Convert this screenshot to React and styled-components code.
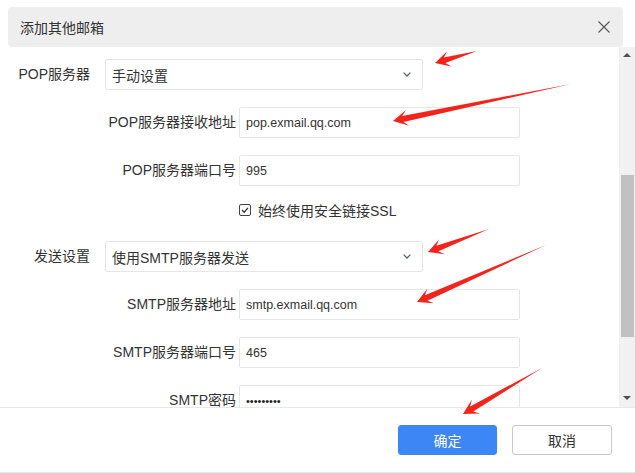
import React from 'react'
import styled, { createGlobalStyle } from 'styled-components'

const GlobalStyle = createGlobalStyle`
  html, body {
    margin: 0;
    padding: 0;
    background: #fff;
  }
  body {
    font-family: "Liberation Sans", Arial, "Noto Sans CJK SC", sans-serif;
    color: #333;
  }
`

const Page = styled.div`
  position: relative;
  width: 635px;
  height: 473px;
  display: flex;
  flex-direction: column;
  overflow: hidden;
`

const Header = styled.div`
  height: 40px;
  margin: 7px 12px 0 8px;
  padding: 0 13px 0 12px;
  background: #eeeeee;
  border-radius: 4px;
  display: flex;
  align-items: center;
  justify-content: space-between;
  font-size: 14px;
  color: #333;
`

const CloseBtn = styled.span`
  display: flex;
  width: 12px;
  height: 12px;
  cursor: pointer;
`

const Body = styled.div`
  height: 360px;
  display: flex;
`

const Content = styled.div`
  flex: 1;
  overflow: hidden;
  padding-top: 12px;
`

const Row = styled.div`
  display: flex;
  align-items: center;
  height: 31px;
  margin-bottom: 17px;
  font-size: 14px;
`

const Label = styled.div`
  width: ${p => (p.$sub ? '236px' : '90px')};
  margin-right: ${p => (p.$sub ? '3px' : '15px')};
  line-height: 14px;
  padding-bottom: 2px;
  text-align: right;
  white-space: nowrap;
  color: #333;
`

const Select = styled.div`
  box-sizing: border-box;
  width: 318px;
  height: 31px;
  border: 1px solid #e6e6e6;
  border-radius: 2px;
  padding: 0 11px 0 6px;
  display: flex;
  align-items: center;
  justify-content: space-between;
  font-size: 14px;
  color: #333;
`

const Field = styled.div`
  box-sizing: border-box;
  width: 281px;
  height: 31px;
  border: 1px solid #e6e6e6;
  border-radius: 2px;
  padding: 0 6px;
  display: flex;
  align-items: center;
  font-size: 12.5px;
  color: #333;
`

const Dots = styled.span`
  font-size: 11px;
  color: #222;
`

const CheckRow = styled.div`
  display: flex;
  align-items: center;
  height: 14px;
  margin-bottom: 24px;
  padding-left: 239px;
  font-size: 14px;
  color: #333;
`

const CheckBox = styled.span`
  display: flex;
  width: 12px;
  height: 12px;
  margin-right: 7px;
`

const ScrollBar = styled.div`
  width: 16px;
  background: #f1f1f1;
  display: flex;
  flex-direction: column;
`

const ScrollArrow = styled.div`
  height: 16px;
  display: flex;
  align-items: center;
  justify-content: center;
  &::after {
    content: '';
    width: 0;
    height: 0;
    border-left: 4px solid transparent;
    border-right: 4px solid transparent;
    ${p => (p.$down
      ? 'border-top: 4px solid #505050; margin-top: -3px;'
      : 'border-bottom: 4px solid #505050;')}
  }
`

const Track = styled.div`
  flex: 1;
  display: flex;
  justify-content: center;
`

const Thumb = styled.div`
  width: 13px;
  margin-left: 1px;
  background: #c1c1c1;
`

const Footer = styled.div`
  box-sizing: border-box;
  height: 66px;
  border-top: 1px solid #e8e8e8;
  border-bottom: 1px solid #e8e8e8;
  display: flex;
  justify-content: flex-end;
  align-items: flex-start;
  padding: 17px 23px 0 0;
  gap: 15px;
`

const Button = styled.button`
  box-sizing: border-box;
  width: ${p => (p.$primary ? '99px' : '100px')};
  height: 30px;
  border-radius: 3px;
  font-family: inherit;
  font-size: 14px;
  cursor: pointer;
  border: 1px solid ${p => (p.$primary ? '#3d86f6' : '#c9c9c9')};
  background: ${p => (p.$primary ? '#3d86f6' : '#fff')};
  color: ${p => (p.$primary ? '#fff' : '#333')};
`

const Overlay = styled.svg`
  position: absolute;
  left: 0;
  top: 0;
  pointer-events: none;
`

// tail x, tail y, tip x, tip y
const arrows = [
  [477, 51, 435, 63],
  [571, 84, 393, 121],
  [489, 229, 428, 252],
  [546, 245, 417, 302],
  [542, 368, 463, 414],
]

function arrowPoints([tx, ty, px, py]) {
  const dx = px - tx
  const dy = py - ty
  const len = Math.hypot(dx, dy)
  const ux = dx / len
  const uy = dy / len
  const nx = -uy
  const ny = ux
  const at = (back, side) =>
    `${(px - ux * back + nx * side).toFixed(1)},${(py - uy * back + ny * side).toFixed(1)}`
  return [
    `${tx},${ty}`,
    at(10, 3),
    at(15, 8),
    `${px},${py}`,
    at(15, -8),
    at(10, -3),
  ].join(' ')
}

const Chevron = () => (
  <svg width="8" height="5" viewBox="0 0 8 5">
    <polyline points="0.6,0.6 4,4 7.4,0.6" fill="none" stroke="#5a6470" strokeWidth="1.3" />
  </svg>
)

export default function App() {
  return (
    <Page>
      <GlobalStyle />
      <Header>
        <span>添加其他邮箱</span>
        <CloseBtn>
          <svg width="12" height="12" viewBox="0 0 12 12">
            <path d="M0.5 0.5 L11.5 11.5 M11.5 0.5 L0.5 11.5" stroke="#555" strokeWidth="1.1" />
          </svg>
        </CloseBtn>
      </Header>
      <Body>
        <Content>
          <Row>
            <Label>POP服务器</Label>
            <Select>手动设置<Chevron /></Select>
          </Row>
          <Row>
            <Label $sub>POP服务器接收地址</Label>
            <Field>pop.exmail.qq.com</Field>
          </Row>
          <Row>
            <Label $sub>POP服务器端口号</Label>
            <Field>995</Field>
          </Row>
          <CheckRow>
            <CheckBox>
              <svg width="12" height="12" viewBox="0 0 12 12">
                <rect x="0.5" y="0.5" width="11" height="11" rx="1.5" fill="#fff" stroke="#444" />
                <polyline points="3,6 5.2,8.2 9,3.8" fill="none" stroke="#333" strokeWidth="1.3" />
              </svg>
            </CheckBox>
            始终使用安全链接SSL
          </CheckRow>
          <Row>
            <Label>发送设置</Label>
            <Select>使用SMTP服务器发送<Chevron /></Select>
          </Row>
          <Row>
            <Label $sub>SMTP服务器地址</Label>
            <Field>smtp.exmail.qq.com</Field>
          </Row>
          <Row>
            <Label $sub>SMTP服务器端口号</Label>
            <Field>465</Field>
          </Row>
          <Row>
            <Label $sub>SMTP密码</Label>
            <Field><Dots>•••••••••</Dots></Field>
          </Row>
        </Content>
        <ScrollBar>
          <ScrollArrow />
          <Track>
            <Thumb style={{ marginTop: 112, height: 162 }} />
          </Track>
          <ScrollArrow $down />
        </ScrollBar>
      </Body>
      <Footer>
        <Button $primary>确定</Button>
        <Button>取消</Button>
      </Footer>
      <Overlay width="635" height="473" viewBox="0 0 635 473">
        {arrows.map((a, i) => (
          <polygon key={i} points={arrowPoints(a)} fill="#f4231b" />
        ))}
      </Overlay>
    </Page>
  )
}
